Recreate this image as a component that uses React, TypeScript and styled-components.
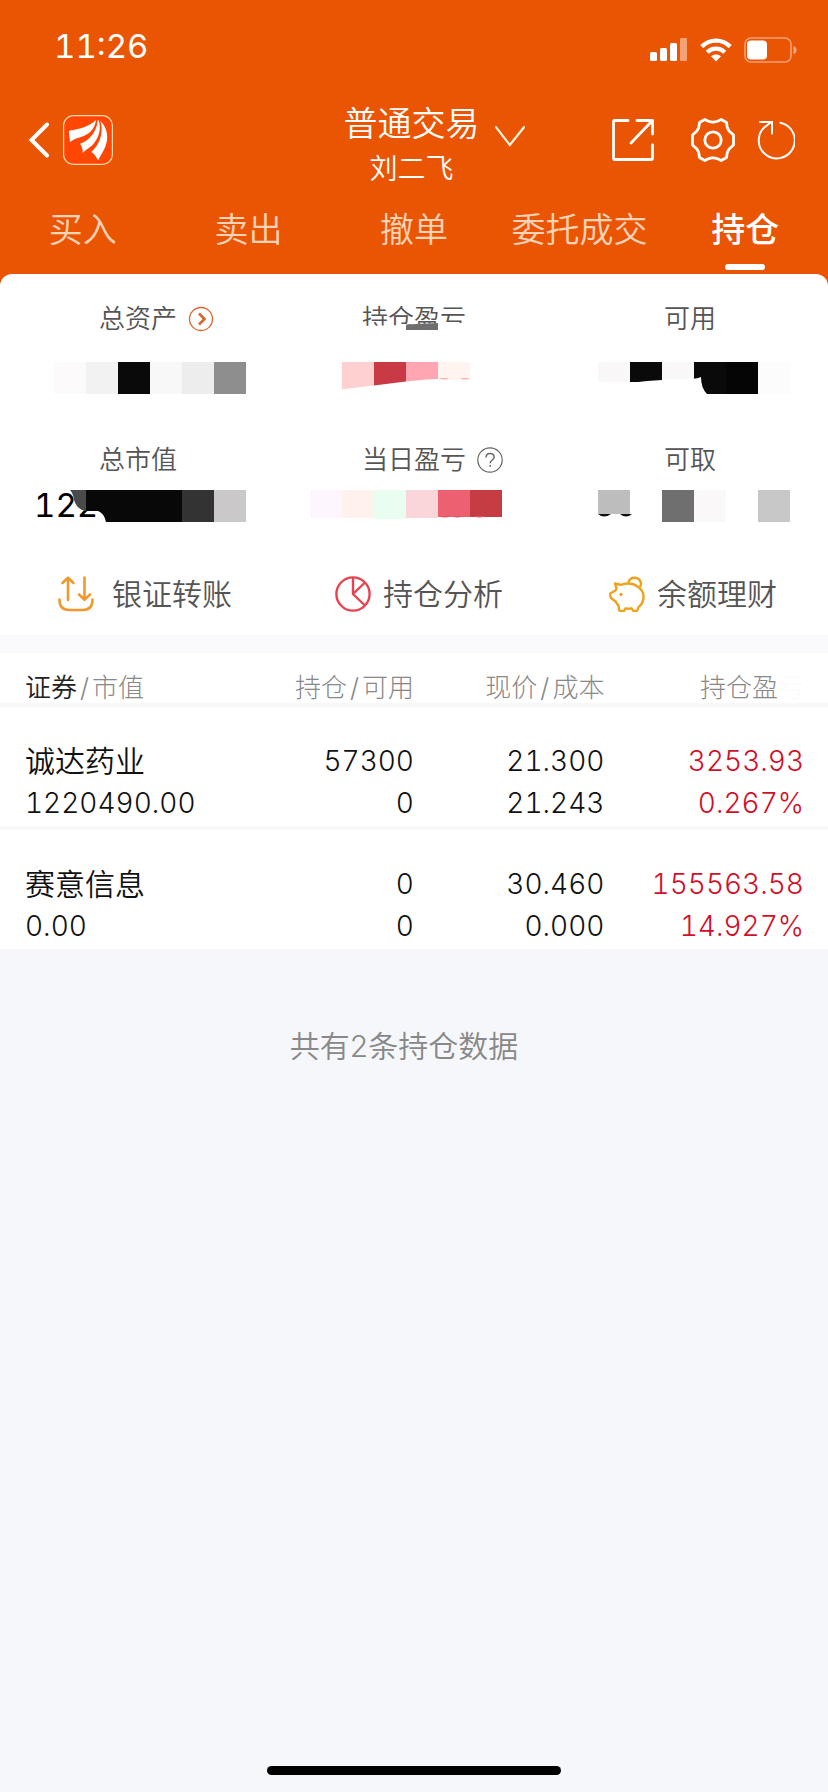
import React from "react";
import styled, { createGlobalStyle } from "styled-components";

const GlobalStyle = createGlobalStyle`
  * { box-sizing: border-box; }
  body {
    margin: 0;
    background: #f6f7fa;
    font-family: "Inter", "Noto Sans CJK SC", sans-serif;
    font-weight: 350;
    color: #111;
  }
  button, a { font: inherit; color: inherit; }
  svg { display: block; flex: none; }
`;

const Screen = styled.div`
  min-height: 100vh;
  display: flex;
  flex-direction: column;
`;

const Top = styled.header`
  background: #ea5504;
  color: #fff;
`;

const StatusBar = styled.div`
  height: 92px;
  padding: 0 30px 0 54px;
  display: flex;
  align-items: center;
  justify-content: space-between;
`;

const Clock = styled.time`
  font-size: 33px;
  line-height: 40px;
  font-weight: 400;
  font-variant-numeric: tabular-nums;
`;

const StatusIcons = styled.div`
  display: flex;
  align-items: center;
  gap: 12px;
  padding-top: 8px;
`;

const NavBar = styled.div`
  display: grid;
  grid-template-columns: 1fr auto 1fr;
  align-items: start;
  padding: 12px 33px 0 28px;
`;

const NavSide = styled.div<{ $end?: boolean }>`
  height: 72px;
  display: flex;
  align-items: center;
  justify-content: ${(p) => (p.$end ? "flex-end" : "flex-start")};
  gap: ${(p) => (p.$end ? "22px" : "14px")};
`;

const IconButton = styled.button<{ $spaced?: boolean }>`
  padding: 0;
  border: 0;
  background: none;
  margin-right: ${(p) => (p.$spaced ? "15px" : "0")};
  cursor: pointer;
`;

const Account = styled.button`
  display: grid;
  grid-template-columns: 30px auto 30px;
  column-gap: 15px;
  padding: 0;
  border: 0;
  background: none;
  cursor: pointer;
`;

const AccountText = styled.span`
  grid-column: 2;
  display: flex;
  flex-direction: column;
  align-items: center;
  gap: 7px;
`;

const AccountType = styled.span`
  font-size: 34px;
  line-height: 40px;
`;

const AccountName = styled.span`
  font-size: 28px;
  line-height: 36px;
`;

const ChevronBox = styled.span`
  padding-top: 22px;
`;

const Tabs = styled.nav`
  display: grid;
  grid-template-columns: repeat(5, 1fr);
  padding-top: 19px;
`;

const Tab = styled.a<{ $active?: boolean }>`
  display: flex;
  flex-direction: column;
  align-items: center;
  gap: 10px;
  padding-bottom: 4px;
  font-size: 34px;
  line-height: 48px;
  white-space: nowrap;
  text-decoration: none;
  font-weight: ${(p) => (p.$active ? 500 : 350)};
  color: ${(p) => (p.$active ? "#fff" : "#ffd3b8")};

  &::after {
    content: "";
    width: 40px;
    height: 6px;
    border-radius: 3px;
    background: ${(p) => (p.$active ? "#fff" : "transparent")};
  }
`;

const PanelBack = styled.div`
  background: #ea5504;
`;

const Panel = styled.section`
  background: #fff;
  border-radius: 12px 12px 0 0;
  padding: 27px 0 23px;
`;

const MetricRow = styled.div`
  display: grid;
  grid-template-columns: repeat(3, 1fr);
  margin-bottom: 48px;
`;

const Metric = styled.div<{ $gap: number }>`
  position: relative;
  display: flex;
  flex-direction: column;
  align-items: center;
  gap: ${(p) => p.$gap}px;
`;

const MetricLabel = styled.div`
  display: grid;
  grid-template-columns: 26px auto 26px;
  column-gap: 11px;
  align-items: center;
  font-size: 26px;
  line-height: 36px;
  color: #555;
  white-space: nowrap;

  & > span { grid-column: 2; }
`;

const MetricValue = styled.div`
  position: relative;
  width: 276px;
  height: 32px;
  font-size: 33px;
  line-height: 30px;
  font-weight: 400;
  font-variant-numeric: tabular-nums;
  color: #000;
  padding-left: 34px;
`;

const Mask = styled.svg`
  position: absolute;
  left: 0;
  top: 0;
`;

const Actions = styled.div`
  display: grid;
  grid-template-columns: repeat(3, 1fr);
  column-gap: 4px;
  padding: 6px 0 0 10px;
`;

const Action = styled.button<{ $gap: number }>`
  display: flex;
  align-items: center;
  justify-content: center;
  gap: ${(p) => p.$gap}px;
  padding: 0;
  border: 0;
  background: none;
  font-size: 30px;
  line-height: 36px;
  color: #555;
  white-space: nowrap;
  cursor: pointer;
`;

const Band = styled.div`
  height: 18px;
  background: #fafafc;
`;

const Table = styled.table`
  width: 100%;
  table-layout: fixed;
  border-collapse: separate;
  border-spacing: 0;
  background: #fff;
`;

const HeadCell = styled.th<{ $w: string }>`
  width: ${(p) => p.$w};
  padding: 20px 0 0;
  border-bottom: 4px solid #f8f8f9;
  font-size: 26px;
  line-height: 30px;
  font-weight: 300;
  color: #888;
  text-align: right;
  white-space: nowrap;

  &:first-child { text-align: left; padding-left: 25px; }
  &:last-child { padding-right: 24px; }
  & > b { color: #222; font-weight: 350; }
  & > i { font-style: normal; color: #fafafa; }
`;

const Slash = styled.span`
  padding: 0 3px;
`;

const Cell = styled.td<{ $gain?: boolean }>`
  padding: 33px 0 2px;
  border-bottom: 4px solid #f8f8f9;
  font-size: 28px;
  line-height: 42px;
  font-variant-numeric: tabular-nums;
  text-align: right;
  white-space: nowrap;
  color: ${(p) => (p.$gain ? "#d0102a" : "#111")};

  &:first-child { text-align: left; padding-left: 25px; }
  &:last-child { padding-right: 24px; }
  tr:last-child > & { border-bottom: 0; }
`;

const Line = styled.div`
  height: 42px;
`;

const StockName = styled(Line)`
  font-size: 30px;
`;

const Summary = styled.p`
  margin: 0;
  padding: 77px 20px 0 0;
  text-align: center;
  font-size: 30px;
  line-height: 40px;
  color: #888;
`;

const HomeIndicator = styled.div`
  width: 294px;
  height: 9px;
  margin: auto auto 17px;
  border-radius: 5px;
  background: #000;
`;

type Block = [x: number, color: string, height?: number];

function Blocks({ items }: { items: Block[] }) {
  return (
    <>
      {items.map(([x, color, h = 32]) => (
        <rect key={x} x={x} y={0} width={32} height={h} fill={color} />
      ))}
    </>
  );
}

function MaskSvg({ children }: { children: React.ReactNode }) {
  return (
    <Mask width="276" height="32" viewBox="0 0 276 32" aria-hidden="true">
      {children}
    </Mask>
  );
}

const LabelMask = styled.svg`
  position: absolute;
  left: 86px;
  top: 22px;
`;

const holdings = [
  { name: "诚达药业", value: "1220490.00", held: "57300", free: "0", price: "21.300", cost: "21.243", gain: "3253.93", rate: "0.267%" },
  { name: "赛意信息", value: "0.00", held: "0", free: "0", price: "30.460", cost: "0.000", gain: "155563.58", rate: "14.927%" },
];

export default function App() {
  return (
    <Screen>
      <GlobalStyle />
      <Top>
        <StatusBar>
          <Clock>11:26</Clock>
          <StatusIcons>
            <svg width="38" height="24" viewBox="0 0 38 24" fill="#fff">
              <rect x="0" y="14" width="7" height="9" rx="1.5" />
              <rect x="10" y="10" width="7" height="13" rx="1.5" />
              <rect x="20" y="5" width="7" height="18" rx="1.5" />
              <rect x="30" y="0" width="7" height="23" rx="1" opacity=".45" />
            </svg>
            <svg width="32" height="24" viewBox="0 0 32 24">
              <g fill="none" stroke="#fff" strokeWidth="4.4">
                <path d="M1.8 8.6C9.6.6 22.4.6 30.2 8.6" />
                <path d="M7.2 14.2C12 9.4 20 9.4 24.8 14.2" />
              </g>
              <path d="M11 18.2C13.8 15.8 18.2 15.8 21 18.2L16 23.4Z" fill="#fff" />
            </svg>
            <svg width="54" height="26" viewBox="0 0 54 26">
              <rect x="1" y="1" width="46" height="24" rx="6" fill="none" stroke="#fff" strokeOpacity=".45" strokeWidth="1.6" />
              <rect x="3" y="3.5" width="20" height="19" rx="4" fill="#fff" />
              <path d="M49.5 9C53.5 10 53.5 16 49.5 17Z" fill="#fff" opacity=".5" />
            </svg>
          </StatusIcons>
        </StatusBar>
        <NavBar>
          <NavSide>
            <IconButton aria-label="返回">
              <svg width="21" height="36" viewBox="0 0 21 36" fill="none" stroke="#fff" strokeWidth="4" strokeLinecap="round" strokeLinejoin="miter">
                <path d="M19 2.5L3.5 18L19 33.5" />
              </svg>
            </IconButton>
            <svg width="50" height="50" viewBox="0 0 50 50">
              <rect x=".6" y=".6" width="48.8" height="48.8" rx="10" fill="#ff4605" stroke="#ffd9a8" strokeWidth="1.2" />
              <g fill="#fff">
                <path d="M6 15.8C17 14 26 11.500 33 5C32 14 26 19.500 18 22C13.500 23.400 10 24.600 7 27C6.800 23.500 5.600 20 6 15.800Z" />
                <path d="M34.600 5.500C34 16 27 25.500 17 28.800C19 31.500 19.800 34.500 19.800 38C22.500 34.500 27.500 33 31.500 27.500C36.500 21 38.300 12.500 35.600 5.200Z" />
                <path d="M37.500 6C42 10.500 44.200 16 44.200 22C44.200 31 39.500 37 35 45.500C33.500 42.500 31.500 38.500 28.300 37C36.500 29.500 41 18.500 37.500 6Z" />
              </g>
            </svg>
          </NavSide>
          <Account>
            <AccountText>
              <AccountType>普通交易</AccountType>
              <AccountName>刘二飞</AccountName>
            </AccountText>
            <ChevronBox>
              <svg width="30" height="21" viewBox="0 0 30 21" fill="none" stroke="#fff3dc" strokeWidth="2.2" strokeLinecap="round">
                <path d="M1 1.200L14.800 19L29 1.200" />
              </svg>
            </ChevronBox>
          </Account>
          <NavSide $end>
            <IconButton $spaced aria-label="分享">
              <svg width="42" height="42" viewBox="0 0 42 42" fill="none" stroke="#fff" strokeWidth="2.8" strokeLinecap="round" strokeLinejoin="round">
                <path d="M16 1.500H2.500Q1.500 1.500 1.500 2.500V39.500Q1.500 40.500 2.500 40.500H39.500Q40.500 40.500 40.500 39.500V26" />
                <path d="M25 1.500H40.500V15M40 2L19 24" />
              </svg>
            </IconButton>
            <IconButton aria-label="设置">
              <svg width="44" height="44" viewBox="0 0 44 44" fill="none" stroke="#fff" strokeWidth="2.800" strokeLinejoin="round">
                <path d="M13.800 1.500L17.500 3.200Q22 5 26.500 3.200L30.200 1.500L35.500 4.500L36.200 9Q37 13 40.800 15.400L42.500 17V27L40.800 28.600Q37 31 36.200 35L35.500 39.500L30.200 42.500L26.500 40.800Q22 39 17.500 40.800L13.800 42.500L8.500 39.500L7.800 35Q7 31 3.200 28.600L1.500 27V17L3.200 15.400Q7 13 7.800 9L8.500 4.500Z" />
                <circle cx="22" cy="22" r="8.200" />
              </svg>
            </IconButton>
            <IconButton aria-label="刷新">
              <svg width="38" height="40" viewBox="0 0 38 40" fill="none" stroke="#fff" strokeWidth="2" strokeLinecap="round">
                <path d="M23.500 2.800A18 18 0 1 1 10 5.300L14.500 2" />
                <path d="M3 2H15V13.500" />
              </svg>
            </IconButton>
          </NavSide>
        </NavBar>
        <Tabs>
          <Tab href="#buy">买入</Tab>
          <Tab href="#sell">卖出</Tab>
          <Tab href="#cancel">撤单</Tab>
          <Tab href="#orders">委托成交</Tab>
          <Tab href="#holdings" $active aria-current="page">持仓</Tab>
        </Tabs>
      </Top>
      <PanelBack>
        <Panel>
          <MetricRow>
            <Metric $gap={25}>
              <MetricLabel>
                <span>总资产</span>
                <svg width="26" height="26" viewBox="0 0 26 26" fill="none" stroke="#d9662a">
                  <circle cx="13" cy="13" r="11.500" strokeWidth="1.300" />
                  <path d="M11 7.500L16.500 13L11 18.500" strokeWidth="2.600" />
                </svg>
              </MetricLabel>
              <MetricValue>
                <MaskSvg>
                  <Blocks items={[[54, "#fdfafb"], [86, "#f2f2f2"], [118, "#0a0a0a"], [150, "#f8f8f8"], [182, "#ededed"], [214, "#8e8e8e"]]} />
                </MaskSvg>
              </MetricValue>
            </Metric>
            <Metric $gap={25}>
              <MetricLabel><span>持仓盈亏</span></MetricLabel>
              <LabelMask width="108" height="14" viewBox="0 0 108 14" aria-hidden="true">
                <path d="M0 3L44 2L76 0L108 -1V14H0Z" fill="#fff" />
                <path d="M44 1.500L76 0V7H44Z" fill="#6f6f6f" />
              </LabelMask>
              <MetricValue>
                <MaskSvg>
                  <Blocks items={[[66, "#ffd0d0"], [98, "#c83a46"], [130, "#ffa6b2"], [162, "#fff4ef", 18]]} />
                  <path d="M60 28L98 23.500L130 19.500L150 17.500L162 17V33H60Z" fill="#fff" />
                  <path d="M163 16Q168 19 173 16ZM184 16Q189 19 194 16Z" fill="#fbb3b8" />
                </MaskSvg>
              </MetricValue>
            </Metric>
            <Metric $gap={25}>
              <MetricLabel><span>可用</span></MetricLabel>
              <MetricValue>
                <MaskSvg>
                  <Blocks items={[[46, "#f9f7f8", 20], [78, "#0a0a0a", 20], [110, "#faf7f8", 17], [142, "#0a0a0a"], [174, "#050505"], [206, "#fcfcfc"]]} />
                  <path d="M78 21L95 19L110 18V21ZM136 16Q143 18 149 15Q149 26 155 32H136Z" fill="#fff" />
                </MaskSvg>
              </MetricValue>
            </Metric>
          </MetricRow>
          <MetricRow>
            <Metric $gap={12}>
              <MetricLabel><span>总市值</span></MetricLabel>
              <MetricValue>
                122
                <MaskSvg>
                  <path d="M70 0H86V21Q77 20 74 10Q73 3 70 0Z" fill="#4a4a4a" />
                  <path d="M86 0H182V32H106Q104 23 98 21H86Z" fill="#080808" />
                  <Blocks items={[[182, "#333"], [214, "#cac8c9"]]} />
                </MaskSvg>
              </MetricValue>
            </Metric>
            <Metric $gap={12}>
              <MetricLabel>
                <span>当日盈亏</span>
                <svg width="26" height="26" viewBox="0 0 26 26" fill="none" stroke="#666" strokeWidth="1.200">
                  <circle cx="13" cy="13" r="12.200" />
                  <path d="M9 10.500C9 5.200 17.200 5.200 17.200 10C17.200 13 13.200 13 13.200 16.200M13.200 18V19.800" strokeWidth="1.500" />
                </svg>
              </MetricLabel>
              <MetricValue>
                <MaskSvg>
                  <Blocks items={[[34, "#fdf6ff", 28], [66, "#fff2ed", 28], [98, "#e9fdf1", 29], [130, "#fad6da", 28], [162, "#ec6072", 27], [194, "#c53c42", 27]]} />
                  <path d="M164 26Q169 29 174 26ZM176 26Q181 29 187 26ZM198 26Q203 29 209 26Z" fill="#e8505c" />
                </MaskSvg>
              </MetricValue>
            </Metric>
            <Metric $gap={12}>
              <MetricLabel><span>可取</span></MetricLabel>
              <MetricValue>
                <MaskSvg>
                  <Blocks items={[[46, "#bdbdbd", 24], [110, "#6f6f6f"], [142, "#faf8f9"], [206, "#c8c8c8"]]} />
                  <path d="M46 24Q52 29 59 24ZM68 24Q74 29 80 24Z" fill="#111" />
                </MaskSvg>
              </MetricValue>
            </Metric>
          </MetricRow>
          <Actions>
            <Action $gap={18}>
              <svg width="36" height="36" viewBox="0 0 36 36" fill="none" stroke="#f0992f" strokeWidth="2.600" strokeLinecap="round" strokeLinejoin="round">
                <path d="M10 24V2M4.500 7L10 1.800L15.500 7M26.500 1.500V23.500M21 18.500L26.500 23.800L32 18.500" />
                <path d="M1.500 23.500C1.500 31 5 34 11 34H25C31 34 34.500 31 34.500 23.500" />
              </svg>
              银证转账
            </Action>
            <Action $gap={12}>
              <svg width="36" height="36" viewBox="0 0 36 36" fill="none" stroke="#e84350" strokeWidth="2.400">
                <circle cx="18" cy="18" r="16.600" />
                <path d="M18 1.500V18L30 29.500M18 18L30 6.500" />
              </svg>
              持仓分析
            </Action>
            <Action $gap={12}>
              <svg width="36" height="36" viewBox="0 0 36 36" fill="none" stroke="#efa21c" strokeWidth="2.400" strokeLinejoin="round" strokeLinecap="round">
                <path d="M6 7.500L12 8.800C17 7.200 24 7.200 28.500 10.500C33 13.500 35 18 34.500 22C34 26 32 29.500 29.500 31L28.500 34.200Q28.200 35 27 35H24.500L22.500 32.300C20.500 32.800 18.500 32.800 16.500 32.300L14.800 35H11.500Q10.500 35 10.200 34L9.600 30L6.500 25.500L2 22Q1.200 21 1.200 17.500L6.500 14.500L7.500 12.500Z" />
                <path d="M19.500 6.500C21-.2 30.500.200 32 7C32.200 9 31.500 10.500 30.500 11.500" />
                <circle cx="12" cy="18.500" r="1.200" fill="#efa21c" strokeWidth="1" />
              </svg>
              余额理财
            </Action>
          </Actions>
        </Panel>
      </PanelBack>
      <Band />
      <Table>
        <thead>
          <tr>
            <HeadCell $w="27%"><b>证券</b><Slash>/</Slash>市值</HeadCell>
            <HeadCell $w="23%">持仓<Slash>/</Slash>可用</HeadCell>
            <HeadCell $w="23%">现价<Slash>/</Slash>成本</HeadCell>
            <HeadCell $w="27%">持仓盈<i>亏</i></HeadCell>
          </tr>
        </thead>
        <tbody>
          {holdings.map((h) => (
            <tr key={h.name}>
              <Cell>
                <StockName>{h.name}</StockName>
                <Line>{h.value}</Line>
              </Cell>
              <Cell>
                <Line>{h.held}</Line>
                <Line>{h.free}</Line>
              </Cell>
              <Cell>
                <Line>{h.price}</Line>
                <Line>{h.cost}</Line>
              </Cell>
              <Cell $gain>
                <Line>{h.gain}</Line>
                <Line>{h.rate}</Line>
              </Cell>
            </tr>
          ))}
        </tbody>
      </Table>
      <Summary>共有2条持仓数据</Summary>
      <HomeIndicator />
    </Screen>
  );
}
